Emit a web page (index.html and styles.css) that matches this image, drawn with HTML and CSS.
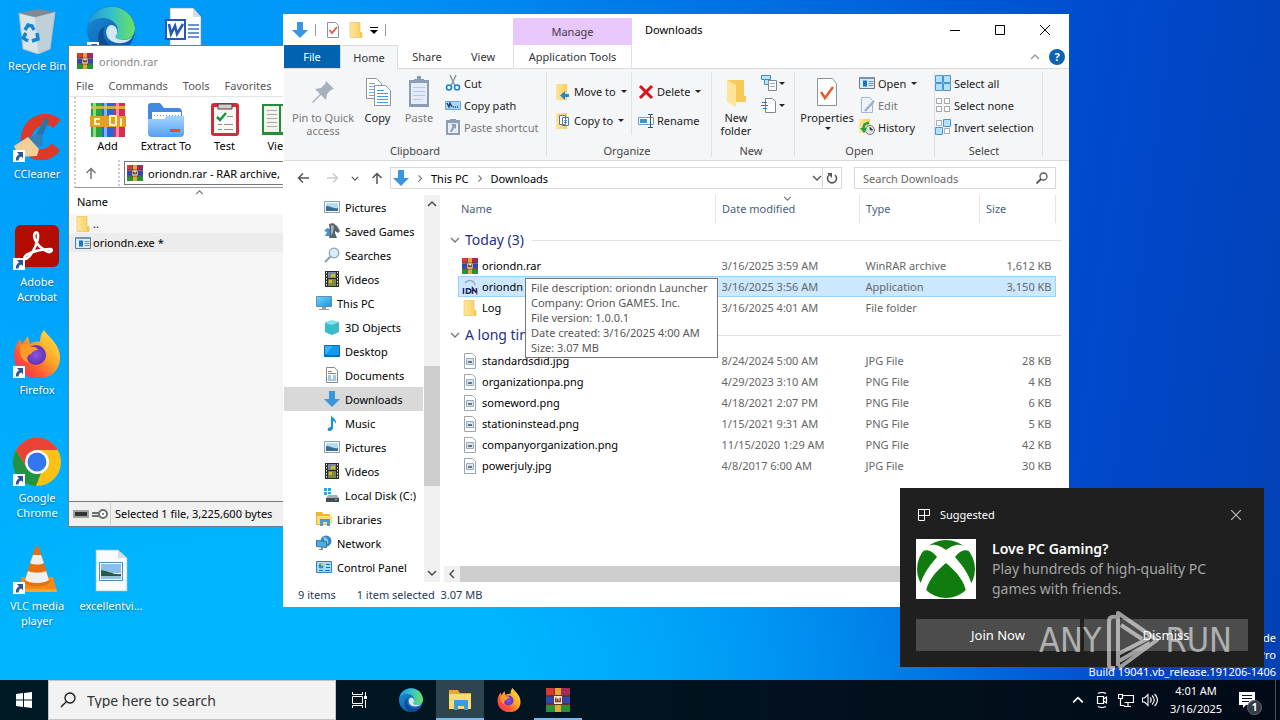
FILE: index.html
```html
<!DOCTYPE html>
<html lang="en">
<head>
<meta charset="utf-8">
<title>Downloads</title>
<link rel="stylesheet" href="styles.css">
</head>
<body>
<svg class="sprite" aria-hidden="true">
  <defs>
    <linearGradient id="g-fold" x1="0" x2="1"><stop offset="0" stop-color="#ffe69a"/><stop offset="1" stop-color="#f8cf5c"/></linearGradient>
    <linearGradient id="g-edge" x1="0" y1="0" x2="1" y2="1"><stop offset="0" stop-color="#1a8fd8"/><stop offset="1" stop-color="#0b4fa0"/></linearGradient>
    <linearGradient id="g-edge2" x1="0" y1="0" x2="1" y2="0"><stop offset="0" stop-color="#2494dc"/><stop offset=".5" stop-color="#35c1c8"/><stop offset="1" stop-color="#6be35b"/></linearGradient>
    <linearGradient id="g-fox" x1="1" y1="0" x2="0" y2="1"><stop offset="0" stop-color="#fff04a"/><stop offset=".4" stop-color="#ffa728"/><stop offset=".7" stop-color="#ff5135"/><stop offset="1" stop-color="#e9257f"/></linearGradient>
    <radialGradient id="g-globe"><stop offset="0" stop-color="#9150e8"/><stop offset="1" stop-color="#5a35b5"/></radialGradient>
    <linearGradient id="g-blue" x1="0" y1="0" x2="1" y2="1"><stop offset="0" stop-color="#6fd6ff"/><stop offset="1" stop-color="#1b94e0"/></linearGradient>
    <linearGradient id="g-ext" x1="0" y1="0" x2="0" y2="1"><stop offset="0" stop-color="#a5d6ff"/><stop offset="1" stop-color="#559ff0"/></linearGradient>
  </defs>
  <symbol id="shortcut" viewBox="0 0 12 12"><path fill="#fff" d="M0 0h12v12H0z"/><path fill="#2a5595" d="M4 2h6v6L8 6.500C6 7.500 5.500 9 5.500 10.500H3C2.500 8 3.500 6 6 4.200z"/></symbol>
  <symbol id="folder" viewBox="0 0 16 16"><path fill="url(#g-fold)" stroke="#e5bd55" stroke-width=".6" d="M2 .5h10v10h2v5H2z"/><path fill="#f3c64f" d="M12 10h1.800v5.500H12z"/></symbol>
  <symbol id="down" viewBox="0 0 16 16"><path fill="#3b96dd" d="M5 0h6v8h5l-8 8-8-8h5z"/></symbol>
  <symbol id="rar" viewBox="0 0 16 16"><path fill="#a52a5c" d="M0 0h16v5H0z"/><path fill="#d33c30" d="M0 0h5v5H0z"/><path fill="#2d49b8" d="M0 5.500h16v5H0z"/><path fill="#27913a" d="M0 11h16v5H0z"/><path fill="#7a2a2a" d="M0 4.600h16v1H0zM0 10.300h16v1H0z"/><path fill="#e8a531" d="M6 0h4v16H6z"/><path fill="#f3ead0" stroke="#5c3c28" stroke-width=".7" d="M5 5h6v6H5z"/><path fill="none" stroke="#813b2a" d="M6.500 6.500V9h1.300V7v2h1.700V6.500"/></symbol>
  <symbol id="exe" viewBox="0 0 16 16"><path fill="#d9ecfa" stroke="#65798c" d="M.5 2.500h15v11H.5z"/><path fill="#7894aa" d="M0 2h16v2H0z"/><path fill="#0c78d2" d="M4 5.500h4v6H4z"/><path stroke="#5599d2" d="M9.500 6.500h5M9.500 8.500h5M9.500 10.500h5"/></symbol>
  <symbol id="pic" viewBox="0 0 16 16"><path fill="#fff" stroke="#8ba0b4" d="M.5 2.500h15v11H.5z"/><path fill="#b6dcf6" d="M2 4h12v5H2z"/><path fill="#3d6c92" d="M2 7c4 0 7 3 12 2v3H2z"/></symbol>
  <symbol id="imgfile" viewBox="0 0 16 16"><path fill="#fff" stroke="#9aa6ad" d="M2.500.5h8l3 3v12h-11z"/><path fill="#dae3ea" stroke="#8799a9" stroke-width=".8" d="M4.500 5.500h7v6h-7z"/><path fill="#587c98" d="M6 8h4v2H6z"/></symbol>
  <symbol id="doc" viewBox="0 0 16 16"><path fill="#fff" stroke="#7d8a93" d="M2.500.5h8l3 3v12h-11z"/><path stroke="#4d8fc4" d="M4 4.500h4M4 6.500h8M4 9h3M9 9h3M4 11h3M9 11h3M4 13h8"/></symbol>
  <symbol id="chess" viewBox="0 0 16 16"><path fill="#4593cb" d="M0 8l3-3 3 1v7H1l2-4z"/><path fill="#59636c" d="M5 1l4-1 4 3 3 5-2 2-3-2v2l2 5H5l1-6z"/><path fill="#a5b5c0" d="M7 2l3 1-1 6-2 4z"/></symbol>
  <symbol id="search" viewBox="0 0 16 16"><circle cx="10" cy="6" r="4.800" fill="#d8effb" stroke="#8ba3b2" stroke-width="1.200"/><path stroke="#8e9ca5" stroke-width="2" d="M6.500 9.500L1 15"/></symbol>
  <symbol id="film" viewBox="0 0 16 16"><path fill="#302c25" d="M1 0h14v16H1z"/><path fill="#7886b9" d="M4 1h8v6H4z"/><path fill="#6e8d45" d="M4 8h8v7H4z"/><path fill="#dfb23e" d="M7 3h4v3H7zM5 9h3v3H5z"/><path stroke="#eee" stroke-dasharray="1.500 1.500" d="M2.500 1v14M13.500 1v14"/></symbol>
  <symbol id="pc" viewBox="0 0 16 16"><path fill="url(#g-blue)" stroke="#517993" stroke-width=".8" d="M.5 1.500h15v10H.5z"/><path fill="#8ca0ad" d="M6 12h4v2H6zM3 14h10v1H3z"/></symbol>
  <symbol id="cube" viewBox="0 0 16 16"><path fill="#83e2ec" d="M8 1l7 2v10l-7 3-7-3V3z"/><path fill="#31bdcc" d="M1 4l7 2v10l-7-3z"/><path fill="#159dac" d="M8 6l7-3v10l-7 3z" opacity=".6"/></symbol>
  <symbol id="desk" viewBox="0 0 16 16"><path fill="#1298ef" stroke="#0869b3" d="M.5 2.500h15v11H.5z"/><path fill="#0869b3" d="M1 12h14v1.500H1z"/><path fill="#3db2fa" d="M1 3h8l-7 8H1z"/></symbol>
  <symbol id="note" viewBox="0 0 16 16"><path fill="#198fe0" d="M7 0c1 3 6 4 5 9-1-3-3-3-3-3v7c0 2-2 3-4 3s-2-4 2-4z"/></symbol>
  <symbol id="disk" viewBox="0 0 16 16"><path fill="#24a8e8" d="M0 1h3v3H0zM4 1h3v3H4zM0 5h3v3H0zM4 5h3v2H4z"/><path fill="#a7b0b5" d="M4 8h9l2 3H2z"/><path fill="#454e53" d="M2 11h13v4H2z"/><path fill="#59dd6e" d="M11 12h2v1h-2z"/></symbol>
  <symbol id="lib" viewBox="0 0 16 16"><path fill="#e9b53d" d="M0 1h6l1 2h7v11H0z"/><path fill="#ffdd76" d="M1 5h15v8H1z"/><path fill="#459bdc" d="M4 8h10v7h-3v-4H7v4H4z"/></symbol>
  <symbol id="net" viewBox="0 0 16 16"><circle cx="10" cy="6" r="5.500" fill="#368ac3"/><path fill="#8dcaed" d="M7 2c4 0 6 3 5 7L9 7z"/><path fill="#4fabe0" stroke="#37759f" d="M.5 5.500l10 1v6l-10-1z"/><path fill="#7a93a2" d="M5 12h2v3H3v-1h2z"/></symbol>
  <symbol id="panel" viewBox="0 0 16 16"><path fill="#aadcf8" stroke="#3782b2" d="M.5 2.500h15v11H.5z"/><circle cx="5" cy="7" r="2.500" fill="#248fce"/><path fill="#efb938" d="M5 7V4a3 3 0 013 3z"/><path stroke="#1870a8" d="M10 5.500h4M10 8.500h4M3 11.500h4M9 11.500h5"/></symbol>
  <symbol id="idn" viewBox="0 0 16 16"><path fill="none" stroke="#8fa9c6" stroke-width="1.500" d="M3 4c3-4 9-3 10 2"/><path fill="none" stroke="#25285f" stroke-width="1.500" d="M1.500 9v6M4.500 9.700h2c3 0 3 4.600 0 4.600h-2zM10.500 15V9l4 5V9"/><path stroke="#ba3555" d="M12 12l3 3"/></symbol>
  <symbol id="edge" viewBox="0 0 48 48"><circle cx="24" cy="24" r="24" fill="url(#g-edge)"/><path fill="url(#g-edge2)" d="M1 20C5-5 44-7 48 22c0 9-7 14-17 11-3-1-3-3-1-5 3-8-4-16-14-16C8 12 3 16 1 20z"/><path fill="#0e3e86" d="M18 21c-6 10 5 27 24 19-12 17-31 5-31-7 0-8 4-12 7-12z" opacity=".7"/><path fill="#e9f5fb" d="M24 19c5 0 7 5 6 9-2 2-2 4 1 5 6 2 12 1 15-3-5 10-23 9-26 0-2-5 0-10 4-11z" opacity=".9"/></symbol>
  <symbol id="firefox" viewBox="0 0 48 48"><path fill="url(#g-fox)" d="M4 14l3-5 2 5 6-8 2 8c3-2 7-3 10-2 0-5 1-9 4-12 4 7 17 14 16 29C45 57 2 54 1 26c0-5 1-9 3-12z"/><circle cx="23" cy="25" r="10" fill="url(#g-globe)"/><path fill="#ff9928" d="M8 15c4-2 8-1 10 2 3-1 6 0 7 3-3 0-6 2-7 4-4 1-5 5-2 9-8-2-11-12-8-18z"/></symbol>
  <symbol id="explorer" viewBox="0 0 24 24"><path fill="#e5a72e" d="M1 2h9l2 3h11v4H1z"/><path fill="#ffda70" d="M1 6h22v15H1z"/><path fill="#3c9ce0" d="M6 12h14v10h-4v-4h-6v4H6z"/></symbol>
  <symbol id="arrow" viewBox="0 0 12 12"><path fill="none" stroke="currentColor" stroke-width="1.500" d="M6 12V1.500M1.500 6L6 1.500 10.500 6"/></symbol>
  <symbol id="chev" viewBox="0 0 10 6"><path fill="none" stroke="currentColor" stroke-width="1.400" d="M1 1l4 4 4-4"/></symbol>
  <symbol id="clip" viewBox="0 0 24 32"><path fill="#8d9bb4" d="M2 4h20v27H2z"/><path fill="#e4ecf7" d="M4 7h16v21H4z"/><path fill="#8d9bb4" d="M7 7V3h3V0h4v3h3v4z"/><path stroke="#bac8dc" d="M6 11.500h12M6 15.500h12M6 19.500h12M6 23.500h9"/></symbol>
</svg>

<main class="desktop">
  <div class="icons">
    <a class="shortcut" href="#"><span class="pic"><svg viewBox="0 0 48 48"><path fill="#d9e4e9" stroke="#a9bdc8" d="M6 7l16 4 20-5-5 37-12 5-15-5z"/><path fill="#b1c5cf" d="M22 11l20-5-5 37-12 5z" opacity=".65"/><path fill="#7d8a91" d="M6 7l19-4 17 3-20 5z"/><g fill="none" stroke="#1686d3" stroke-width="3.500"><path d="M12 24l3-5 4 1 2 4M24 27l1 6-6 2M15 35l-5-3 3-5"/></g></svg></span><span>Recycle Bin</span></a>
    <a class="shortcut" href="#"><span class="pic"><svg viewBox="0 0 48 48"><path fill="none" stroke="#dd3829" stroke-width="11" d="M44 10C31-2 10 11 14 29c3 15 20 15 29 4"/><path fill="#2875a7" d="M32 4l4 2-8 19-6-2z"/><path fill="#3680b5" d="M15 23l14-3 1 12-10 1z"/><path fill="#f2cf99" d="M1 32l14-9 11 12-2 7-18 1z"/></svg><svg class="tag"><use href="#shortcut"/></svg></span><span>CCleaner</span></a>
    <a class="shortcut" href="#"><span class="pic"><svg viewBox="0 0 48 48"><rect x="2" y="3" width="44" height="42" rx="6" fill="#b30b00"/><path fill="none" stroke="#fff" stroke-width="2.600" d="M12 37c-3-4 9-9 25-10 4 0 1 5-4 2C25 25 19 16 22 11c3-3 4 3 2 9-2 7-8 17-12 17z"/></svg><svg class="tag"><use href="#shortcut"/></svg></span><span>Adobe Acrobat</span></a>
    <a class="shortcut" href="#"><span class="pic"><svg><use href="#firefox"/></svg><svg class="tag"><use href="#shortcut"/></svg></span><span>Firefox</span></a>
    <a class="shortcut" href="#"><span class="pic"><svg viewBox="0 0 48 48"><circle cx="24" cy="24" r="24" fill="#fbc116"/><path fill="#229342" d="M3 12l11 18c2 4 7 6 14 5l-5 13A24 24 0 013 12z"/><path fill="#ea4335" d="M3 12a24 24 0 0142 0H24L14 30z"/><circle cx="24" cy="24" r="12" fill="#fff"/><circle cx="24" cy="24" r="9.500" fill="#3377ef"/></svg><svg class="tag"><use href="#shortcut"/></svg></span><span>Google Chrome</span></a>
    <a class="shortcut" href="#"><span class="pic"><svg viewBox="0 0 48 48"><path fill="#f48a13" d="M9 31h31l4 14H4z"/><path fill="#ffa52d" d="M5 43h38l1 3H4z"/><path fill="#e86f0b" d="M22 2c1-2 3-2 4 0l11 34c-4 6-22 6-26 0z"/><path fill="#eef0f0" d="M20 9h8l3 8c-3 2-10 2-14 0zM15 25c5 2 14 2 18 0l3 9c-5 4-19 4-24 0z"/></svg><svg class="tag"><use href="#shortcut"/></svg></span><span>VLC media player</span></a>
    <a class="shortcut col2" href="#" aria-label="Edge"><span class="pic"><svg><use href="#edge"/></svg><svg class="tag"><use href="#shortcut"/></svg></span></a>
    <a class="shortcut col2 last" href="#"><span class="pic"><svg viewBox="0 0 48 48"><path fill="#f9fafb" stroke="#abc" stroke-width=".7" d="M9 4h22l9 8v33H9z"/><path fill="#d3dde5" d="M31 4v8h9z"/><path fill="#fff" stroke="#4f8abb" d="M12.500 16.500h23v18h-23z"/><path fill="#8bbfea" d="M14 18h20v9H14z"/><path fill="#285a49" d="M14 24c7 1 13 5 20 4v2H14z"/><path fill="#97c4d8" d="M14 30h20v3H14z"/></svg></span><span>excellentvi...</span></a>
    <a class="shortcut col3" href="#" aria-label="Document"><span class="pic"><svg viewBox="0 0 48 48"><path fill="#fff" stroke="#7f9bb4" stroke-width=".6" d="M9 2h23l8 9v35H9z"/><path fill="#d7dce2" d="M32 2v9h8z"/><path stroke="#3c6fc0" stroke-width="1.300" d="M27 19h11M27 23h11M27 27h11M27 31h11"/><path fill="#2459b8" d="M4 13h21v21H4z"/><path fill="#fff" d="M6 15h17v17H6z"/><path fill="none" stroke="#2459b8" stroke-width="2.600" d="M8 18l2 10 4-8 2 8 6-10"/></svg></span></a>
  </div>

  <p class="build">Test Mode<br>Windows 10 Pro<br>Build 19041.vb_release.191206-1406</p>

  <section class="window winrar" aria-label="oriondn.rar">
    <header class="wr-title"><svg class="i16"><use href="#rar"/></svg>oriondn.rar</header>
    <nav class="wr-menu"><button>File</button><button>Commands</button><button>Tools</button><button>Favorites</button></nav>
    <div class="wr-tools">
      <button><svg viewBox="0 0 36 36"><path fill="#27a543" d="M1 1h11v34H1z"/><path fill="#2c63d8" d="M12 1h12v34H12z"/><path fill="#d62e55" d="M24 1h11v34H24z"/><path fill="#8ddd79" d="M3 1h3v34H3z"/><path fill="#83b4ff" d="M14 1h3v34h-3z"/><path fill="#ff8caa" d="M26 1h3v34h-3z"/><path fill="#e5c33a" d="M1 4h34v3H1z" opacity=".8"/><path fill="#e2a024" d="M0 14h36v11H0z"/><path fill="none" stroke="#fff0b5" stroke-width="2" d="M10 17H5v5h5M20 14h6v9h-6zM31 16v8"/></svg>Add</button>
      <button class="wide"><svg viewBox="0 0 36 36"><path fill="#4188df" d="M0 4q0-3 3-3h9l4 5h14q4 0 4 4v20H0z"/><path fill="#fff" d="M4 10h29v10H4z"/><path fill="none" stroke="#7f9fb9" stroke-dasharray="1 2" d="M6 13.500h25"/><path fill="url(#g-ext)" d="M0 17h16l3-3h17v17q0 4-4 4H4q-4 0-4-4z"/><path fill="#e94a32" d="M22 27h10v3H22z"/></svg>Extract To</button>
      <button><svg viewBox="0 0 36 36"><rect x="4" y="1" width="28" height="33" rx="3" fill="#d42a39"/><path fill="#faf8f6" d="M7 5h22v26H7z"/><path fill="#c8d0d2" stroke="#6b3138" d="M11 2h14v5H11z"/><path fill="none" stroke="#18943e" stroke-width="2.500" d="M10 15l3 3 6-7"/><path stroke="#8b9296" d="M20 14.500h6M11 22.500h4M17 22.500h9M11 27.500h4M17 27.500h9"/></svg>Test</button>
      <button><svg viewBox="0 0 36 36"><path fill="#248c3a" d="M0 2h36v31H0z"/><path fill="#f3f3ed" d="M2 4h15v26H2zM19 4h15v26H19z"/><path stroke="#aaa" d="M5 8.500h10M5 12.500h10M5 16.500h10M5 20.500h10M5 24.500h10"/></svg>View</button>
    </div>
    <div class="wr-path">
      <button class="up" aria-label="Up"><svg class="i12"><use href="#arrow"/></svg></button>
      <label class="combo"><svg class="i16"><use href="#rar"/></svg><select aria-label="Archive path"><option>oriondn.rar - RAR archive, unpacked size 3,225,600 bytes</option></select></label>
    </div>
    <table class="wr-list">
      <thead><tr><th scope="col">Name</th></tr></thead>
      <tbody>
        <tr><td><svg class="i16"><use href="#folder"/></svg>..</td></tr>
        <tr class="picked"><td><svg class="i16"><use href="#exe"/></svg>oriondn.exe *</td></tr>
      </tbody>
    </table>
    <svg class="sort wr-sort"><use href="#chev"/></svg>
    <footer class="wr-status">
      <svg class="drives" viewBox="0 0 36 14"><path fill="#9da2a5" d="M0 3h16v8H0z"/><path fill="#333" d="M2 5h12v4H2z"/><path fill="none" stroke="#6b6f72" stroke-width="2" d="M19 6h9M19 9h8"/><circle cx="30" cy="7" r="4" fill="#fff" stroke="#6b6f72" stroke-width="2"/><circle cx="30" cy="7" r="1" fill="#666"/></svg>
      <span>Selected 1 file, 3,225,600 bytes</span>
    </footer>
  </section>

  <section class="window explorer" aria-label="Downloads">
    <header class="titlebar">
      <div class="quick">
        <svg class="i16"><use href="#down"/></svg><i></i>
        <button aria-label="Properties"><svg class="i16" viewBox="0 0 16 16"><path fill="#fff" stroke="#8793a0" d="M2.500.5h8l3 3v12h-11z"/><path fill="none" stroke="#e2593c" stroke-width="1.800" d="M4.500 8l2.500 3 5-6"/></svg></button>
        <button aria-label="New folder"><svg class="i16"><use href="#folder"/></svg></button>
        <button aria-label="Customize"><svg class="i8" viewBox="0 0 8 8"><path d="M0 1h8v1H0zM0 4h8L4 8z"/></svg></button><i></i>
      </div>
      <span class="manage">Manage</span>
      <h1>Downloads</h1>
      <div class="caption">
        <button aria-label="Minimize"><svg viewBox="0 0 10 10"><path d="M0 5.500h10"/></svg></button>
        <button aria-label="Maximize"><svg viewBox="0 0 10 10"><path d="M.5.5h9v9h-9z"/></svg></button>
        <button aria-label="Close"><svg viewBox="0 0 10 10"><path d="M0 0l10 10M10 0L0 10"/></svg></button>
      </div>
    </header>
    <nav class="tabs">
      <button class="file">File</button><button class="home">Home</button><button>Share</button><button>View</button><button class="apptools">Application Tools</button>
      <span class="help"><svg class="fold flip"><use href="#chev"/></svg><button aria-label="Help">?</button></span>
    </nav>
    <div class="ribbon">
      <div class="group g-clip">
        <div class="tools">
          <button class="big off"><svg viewBox="0 0 32 32"><path fill="#a5b1c0" d="M19 5l8 8-3 1-4 4-1 6-5-5-8 8-1-1 8-8-5-5 6-1 4-4z"/></svg>Pin to Quick access</button>
          <button class="big mid"><svg viewBox="0 0 32 32"><path fill="#fff" stroke="#8795a5" d="M4.500 2.500h10l5 5v15h-15z"/><path stroke="#73ade5" d="M7 7.500h6M7 10.500h9M7 13.500h9M7 16.500h9M7 19.500h9"/><path fill="#fff" stroke="#8795a5" d="M12.500 9.500h11l5 5v15h-16z"/><path stroke="#4f98e1" d="M15 14.500h7M15 17.500h11M15 20.500h11M15 23.500h11M15 26.500h11"/></svg>Copy</button>
          <button class="big narrow off"><svg><use href="#clip"/></svg>Paste</button>
          <div class="stack">
            <button><svg class="i16" viewBox="0 0 16 16"><path stroke="#8b99a3" stroke-width="1.500" d="M5 0l5 11M11 0L6 11"/><circle cx="4" cy="12.500" r="2.500" fill="none" stroke="#1c84cf" stroke-width="1.600"/><circle cx="12" cy="12.500" r="2.500" fill="none" stroke="#1c84cf" stroke-width="1.600"/></svg>Cut</button>
            <button><svg class="i16" viewBox="0 0 16 16"><path fill="#a8d6f6" stroke="#75a9d2" d="M.5 4.500h15v8H.5z"/><path fill="none" stroke="#183b68" stroke-width="1.300" d="M2 6l2 4 1-4 2 4M8 10h1M10 10h1M12 10h1"/></svg>Copy path</button>
            <button class="off"><svg class="i16" viewBox="0 0 16 16"><path fill="#8f9eb5" d="M1 1h14v15H1z"/><path fill="#e7edf6" d="M3 4h10v10H3z"/><path fill="#8f9eb5" d="M5 0h6v3H5zM6 5h5v5L9.500 8.500 7 13H5l2.500-6z"/></svg>Paste shortcut</button>
          </div>
        </div>
        <h2>Clipboard</h2>
      </div>
      <div class="group g-org">
        <div class="tools">
          <div class="stack two split">
            <button><svg class="i16" viewBox="0 0 16 16"><path fill="url(#g-fold)" d="M1 0h11v16H1z"/><path fill="#2a87cf" d="M14 10v3h-4v3l-5-4.500L10 7v3z"/></svg>Move to<b></b></button>
            <button><svg class="i16" viewBox="0 0 16 16"><path fill="url(#g-fold)" d="M1 0h11v16H1z"/><path fill="#fff" stroke="#5a7895" d="M4.500 2.500h6v9h-6zM7.500 4.500h6v8h-6z"/><path stroke="#5595d2" d="M9 7.500h3M9 9.500h3"/></svg>Copy to<b></b></button>
          </div>
          <div class="stack two">
            <button><svg class="i16" viewBox="0 0 16 16"><path stroke="#d9121d" stroke-width="3" d="M2 2l12 12M14 2L2 14"/></svg>Delete<b></b></button>
            <button><svg class="i16" viewBox="0 0 16 16"><path fill="#fff" stroke="#6f9dc1" d="M.5 4.500h15v7H.5z"/><path fill="#3994dc" d="M2 6h7v4H2z"/><path fill="none" stroke="#4d4d4d" d="M10 1.500h5M10 14.500h5M12.500 1v14"/></svg>Rename</button>
          </div>
        </div>
        <h2>Organize</h2>
      </div>
      <div class="group g-new">
        <div class="tools">
          <button class="big narrow"><svg viewBox="0 0 24 32"><path fill="#f5ca58" d="M3 4h17v16h2v6H3z"/><path fill="#ffe599" d="M3 4l9 5v22l-9-5z"/></svg>New folder</button>
          <div class="stack">
            <button aria-label="New item"><svg class="i16" viewBox="0 0 16 16"><path fill="#bde2fa" stroke="#3e8ebf" d="M.5.5h9v4h-9zM3.500 4.500h4v5h-4z"/><path fill="#fff" stroke="#7b8994" d="M7.500 5.500h8v10h-8z"/><path stroke="#9baab4" d="M9 8.500h5M9 11.500h5"/></svg><b></b></button>
            <button aria-label="Easy access"><svg class="i16" viewBox="0 0 16 16"><path fill="#fff" stroke="#7b8994" d="M4.500 15.500v-14h7l3 3v11z"/><path stroke="#267bb9" d="M0 8.500h7M1 5.500h5M2 11.500h4"/></svg><b></b></button>
          </div>
        </div>
        <h2>New</h2>
      </div>
      <div class="group g-open">
        <div class="tools">
          <button class="big mid"><svg viewBox="0 0 24 32"><path fill="#fff" stroke="#8b929b" d="M2.500 2.500h15l4 5v22h-19z"/><path fill="none" stroke="#e35e2d" stroke-width="2.500" d="M6 16l4 6 8-11"/></svg>Properties<b></b></button>
          <div class="stack">
            <button><svg class="i16"><use href="#exe"/></svg>Open<b></b></button>
            <button class="off"><svg class="i16" viewBox="0 0 16 16"><path fill="#eef3fa" stroke="#a8b6cc" d="M2.500.5h8l3 3v12h-11z"/><path stroke="#a1afc4" stroke-width="2.500" d="M15 4L6 14"/></svg>Edit</button>
            <button><svg class="i16" viewBox="0 0 16 16"><path fill="url(#g-fold)" d="M0 0h11v14H0z"/><circle cx="11" cy="11" r="4.500" fill="#dde4e5" stroke="#718087"/><path stroke="#667" d="M11 8v3h3"/><path fill="none" stroke="#21a045" stroke-width="2.500" d="M10 4c-5 0-6 3-5 7"/><path fill="#21a045" d="M1 9h7l-3 5z"/></svg>History</button>
          </div>
        </div>
        <h2>Open</h2>
      </div>
      <div class="group g-sel">
        <div class="tools"><div class="stack">
          <button><svg class="i16" viewBox="0 0 16 16"><path fill="#b6dfff" stroke="#4799d2" d="M.5.500h7v7h-7zM8.500.5h7v7h-7zM.5 8.500h7v7h-7zM8.500 8.500h7v7h-7z"/></svg>Select all</button>
          <button><svg class="i16" viewBox="0 0 16 16"><path fill="#fff" stroke="#a0a9af" d="M1.500 1.500h5v5h-5zM9.500 1.500h5v5h-5zM1.500 9.500h5v5h-5zM9.500 9.500h5v5h-5z"/></svg>Select none</button>
          <button><svg class="i16" viewBox="0 0 16 16"><path fill="#fff" stroke="#9eafbb" d="M1.500 1.500h5v5h-5zM9.500 9.500h5v5h-5z"/><path fill="#b6dfff" stroke="#4799d2" d="M8.500.5h7v7h-7zM.5 8.500h7v7h-7z"/></svg>Invert selection</button>
        </div></div>
        <h2>Select</h2>
      </div>
    </div>
    <div class="address">
      <button aria-label="Back"><svg class="i12 left"><use href="#arrow"/></svg></button>
      <button aria-label="Forward" class="dim"><svg class="i12 right"><use href="#arrow"/></svg></button>
      <button aria-label="Recent" class="small"><svg class="i8"><use href="#chev"/></svg></button>
      <button aria-label="Up"><svg class="i12"><use href="#arrow"/></svg></button>
      <div class="crumbs"><svg class="i16"><use href="#down"/></svg><svg class="sep"><use href="#chev"/></svg><a href="#">This PC</a><svg class="sep"><use href="#chev"/></svg><a href="#">Downloads</a>
        <span class="end"><svg class="fold"><use href="#chev"/></svg><button aria-label="Refresh"><svg class="i12" viewBox="0 0 12 12"><path fill="none" stroke="#555" stroke-width="1.600" d="M3 3a4.500 4.500 0 106 0"/><path fill="#555" d="M1 1h5v5z"/></svg></button></span>
      </div>
      <label class="find"><input type="text" placeholder="Search Downloads" aria-label="Search Downloads"><svg class="i12" viewBox="0 0 12 12"><circle cx="7.500" cy="4.500" r="3.500" fill="none" stroke="#555" stroke-width="1.300"/><path stroke="#555" stroke-width="1.800" d="M5 7L.5 11.500"/></svg></label>
    </div>
    <div class="body">
      <nav class="tree">
        <a href="#"><svg class="i16"><use href="#pic"/></svg>Pictures</a>
        <a href="#"><svg class="i16"><use href="#chess"/></svg>Saved Games</a>
        <a href="#"><svg class="i16"><use href="#search"/></svg>Searches</a>
        <a href="#"><svg class="i16"><use href="#film"/></svg>Videos</a>
        <a href="#" class="top"><svg class="i16"><use href="#pc"/></svg>This PC</a>
        <a href="#"><svg class="i16"><use href="#cube"/></svg>3D Objects</a>
        <a href="#"><svg class="i16"><use href="#desk"/></svg>Desktop</a>
        <a href="#"><svg class="i16"><use href="#doc"/></svg>Documents</a>
        <a href="#" class="current"><svg class="i16"><use href="#down"/></svg>Downloads</a>
        <a href="#"><svg class="i16"><use href="#note"/></svg>Music</a>
        <a href="#"><svg class="i16"><use href="#pic"/></svg>Pictures</a>
        <a href="#"><svg class="i16"><use href="#film"/></svg>Videos</a>
        <a href="#"><svg class="i16"><use href="#disk"/></svg>Local Disk (C:)</a>
        <a href="#" class="top"><svg class="i16"><use href="#lib"/></svg>Libraries</a>
        <a href="#" class="top"><svg class="i16"><use href="#net"/></svg>Network</a>
        <a href="#" class="top"><svg class="i16"><use href="#panel"/></svg>Control Panel</a>
      </nav>
      <div class="vbar"><svg class="fold flip"><use href="#chev"/></svg><span class="track"><span class="thumb"></span></span><svg class="fold"><use href="#chev"/></svg></div>
      <div class="content">
        <table class="files">
          <colgroup><col class="c-name"><col class="c-date"><col class="c-type"><col class="c-size"></colgroup>
          <thead><tr><th scope="col">Name</th><th scope="col">Date modified<svg class="sort"><use href="#chev"/></svg></th><th scope="col">Type</th><th scope="col">Size</th></tr></thead>
          <tbody>
            <tr class="bucket"><th colspan="4"><span><svg class="fold"><use href="#chev"/></svg>Today (3)</span></th></tr>
            <tr><td><svg class="i16"><use href="#rar"/></svg>oriondn.rar</td><td>3/16/2025 3:59 AM</td><td>WinRAR archive</td><td>1,612 KB</td></tr>
            <tr class="selected"><td><svg class="i16"><use href="#idn"/></svg>oriondn</td><td>3/16/2025 3:56 AM</td><td>Application</td><td>3,150 KB</td></tr>
            <tr><td><svg class="i16"><use href="#folder"/></svg>Log</td><td>3/16/2025 4:01 AM</td><td>File folder</td><td></td></tr>
          </tbody>
          <tbody>
            <tr class="bucket"><th colspan="4"><span><svg class="fold"><use href="#chev"/></svg>A long time ago (6)</span></th></tr>
            <tr><td><svg class="i16"><use href="#imgfile"/></svg>standardsdid.jpg</td><td>8/24/2024 5:00 AM</td><td>JPG File</td><td>28 KB</td></tr>
            <tr><td><svg class="i16"><use href="#imgfile"/></svg>organizationpa.png</td><td>4/29/2023 3:10 AM</td><td>PNG File</td><td>4 KB</td></tr>
            <tr><td><svg class="i16"><use href="#imgfile"/></svg>someword.png</td><td>4/18/2021 2:07 PM</td><td>PNG File</td><td>6 KB</td></tr>
            <tr><td><svg class="i16"><use href="#imgfile"/></svg>stationinstead.png</td><td>1/15/2021 9:31 AM</td><td>PNG File</td><td>5 KB</td></tr>
            <tr><td><svg class="i16"><use href="#imgfile"/></svg>companyorganization.png</td><td>11/15/2020 1:29 AM</td><td>PNG File</td><td>42 KB</td></tr>
            <tr><td><svg class="i16"><use href="#imgfile"/></svg>powerjuly.jpg</td><td>4/8/2017 6:00 AM</td><td>JPG File</td><td>30 KB</td></tr>
          </tbody>
        </table>
        <div class="hbar"><svg class="west"><use href="#chev"/></svg><span></span></div>
      </div>
    </div>
    <footer class="status"><span>9 items</span><span>1 item selected&nbsp; 3.07 MB</span></footer>
    <div class="tooltip" role="tooltip">File description: oriondn Launcher<br>Company: Orion GAMES. Inc.<br>File version: 1.0.0.1<br>Date created: 3/16/2025 4:00 AM<br>Size: 3.07 MB</div>
  </section>

  <aside class="toast">
    <header><svg class="i12" viewBox="0 0 12 12"><path fill="none" stroke="#fff" d="M.5.5h11v6h-11zM6.500.5v11h-6v-11M3.500 6.500v0"/></svg><span>Suggested</span><button aria-label="Close"><svg class="i10" viewBox="0 0 10 10"><path stroke="#bbb" stroke-width="1.200" d="M0 0l10 10M10 0L0 10"/></svg></button></header>
    <div class="offer">
      <svg class="xbox" viewBox="0 0 60 60"><path fill="#fff" d="M0 0h60v60H0z"/><circle cx="30" cy="30" r="29" fill="#107c10"/><path fill="#fff" d="M10 8c7-5 15-1 20 3 5-4 13-8 20-3l3 4c-5-2-10 1-14 6 9 10 18 23 17 34l-6 2c0-10-10-22-20-30-10 8-20 20-20 30l-6-2C3 41 12 28 21 18 17 13 12 10 7 12z"/></svg>
      <p><strong>Love PC Gaming?</strong><br>Play hundreds of high-quality PC games with friends.</p>
    </div>
    <div class="choices"><button>Join Now</button><button>Dismiss</button></div>
  </aside>

  <div class="brand"><span>ANY</span><svg viewBox="0 0 54 60"><path fill="none" stroke="currentColor" stroke-width="4" stroke-linejoin="round" d="M12 56V3l39 27-38 28M10 7c-6-1-7 1-7 6v42c0 3 2 3 6 3M15 15l21 14M12 44l31-16M13 51l31-18"/></svg><span>RUN</span></div>
</main>

<footer class="taskbar">
  <button class="start" aria-label="Start"><svg class="i16" viewBox="0 0 16 16"><path fill="#fff" d="M0 2l7-1v6.500H0zM8 1l8-1v7.500H8zM0 8.500h7V15l-7-1zM8 8.500h8V16l-8-1z"/></svg></button>
  <label class="ask"><svg class="i16" viewBox="0 0 16 16"><circle cx="10" cy="6" r="5" fill="none" stroke="#111" stroke-width="1.300"/><path stroke="#111" stroke-width="1.300" d="M6.500 9.500L1 15"/></svg><input type="text" placeholder="Type here to search" aria-label="Search"></label>
  <button aria-label="Task view"><svg class="i16" viewBox="0 0 16 16"><path fill="none" stroke="#fff" d="M.5 4.500h10v7H.5zM.5 0v2.500h10V0M.5 16v-2.500h10V16M13.500 0v4M13.500 8v8"/><path fill="#fff" d="M12 4h3v3h-3z"/></svg></button>
  <button class="app" aria-label="Edge"><svg><use href="#edge"/></svg></button>
  <button class="app on" aria-label="File Explorer"><svg><use href="#explorer"/></svg></button>
  <button class="app" aria-label="Firefox"><svg><use href="#firefox"/></svg></button>
  <button class="app run" aria-label="WinRAR"><svg><use href="#rar"/></svg></button>
  <div class="tray">
    <svg class="i12 flip"><use href="#chev"/></svg>
    <svg class="i16" viewBox="0 0 16 16"><path fill="none" stroke="#fff" stroke-width="1.200" d="M3.500 4.500h6v7h-6zM9.500 7l3-2v6l-3-2M4 1.500c3-1.500 5-1.500 8 0M4 14.500c3 1.500 5 1.500 8 0"/></svg>
    <svg class="i16" viewBox="0 0 16 16"><path fill="none" stroke="#fff" stroke-width="1.200" d="M5 3.500h10.500v7h-9M.5 2.500h4v4h-4zM2.500 6.500v7h4M10 11v3M6 14.500h7"/></svg>
    <svg class="i16" viewBox="0 0 16 16"><path fill="none" stroke="#fff" stroke-width="1.100" d="M.5 6h2L6 2.500v11L2.500 10h-2zM8 5.500c1.500 1.500 1.500 3.500 0 5M10 3.500c3 3 3 6 0 9M12.500 2c4 4 4 8 0 12"/></svg>
    <time datetime="2025-03-16T04:01">4:01 AM<br>3/16/2025</time>
    <span class="bell"><svg class="i16" viewBox="0 0 16 16"><path fill="#fff" d="M0 0h16v13H7l-3 3v-3H0z"/><path stroke="#08131f" d="M3 3.500h10M3 6.500h10M3 9.500h7"/></svg><b>1</b></span>
  </div>
</footer>
</body>
</html>
```
FILE: styles.css
```css
* { box-sizing: border-box; }
body { margin: 0; height: 100vh; display: flex; flex-direction: column; overflow: hidden; font: 11px/15px "Noto Sans", "Open Sans", sans-serif; color: #000; }
button, input, select { font: inherit; color: inherit; background: none; border: 0; padding: 0; margin: 0; }
a { color: inherit; text-decoration: none; }
svg { display: block; flex: none; }
.sprite { position: absolute; width: 0; height: 0; }
.i8 { width: 8px; height: 8px; }
.i10 { width: 10px; height: 10px; }
.i12 { width: 12px; height: 12px; }
.i16 { width: 16px; height: 16px; }
.fold { width: 10px; height: 6px; }
.flip { transform: rotate(180deg); }

.desktop { position: relative; flex: 1; min-height: 0; background: radial-gradient(ellipse 900px 480px at 20% 100%, #00b4ff 30%, #00b4ff00), linear-gradient(97deg, #00a2fb 0%, #0096f8 25%, #006ce2 58%, #0049cf 82%, #0341b4 100%); }
.icons { display: grid; grid-template-rows: repeat(6, 108px); grid-template-columns: repeat(3, 74px); grid-auto-flow: column; padding-top: 6px; }
.shortcut { display: flex; flex-direction: column; align-items: center; gap: 4px; text-align: center; color: #fff; text-shadow: 0 1px 2px #0006; }
.shortcut > span + span { width: 64px; }
.shortcut .pic { position: relative; width: 48px; height: 48px; }
.shortcut .pic > svg { width: 48px; height: 48px; }
.shortcut .pic > .tag { position: absolute; left: 0; bottom: 0; width: 12px; height: 12px; }
.col2 { grid-column: 2; grid-row: 1; }
.col3 { grid-column: 3; grid-row: 1; }
.last { grid-row: 6; }
.build { position: absolute; right: 4px; bottom: 0; margin: 0; color: #fff; text-align: right; line-height: 17px; }

.window { position: absolute; display: flex; flex-direction: column; background: #fff; overflow: hidden; }
.winrar { left: 68px; top: 45px; width: 520px; bottom: 153px; border: 1px solid #6c7d88; background: #f5f5f5; }
.wr-title, .wr-menu, .wr-tools, .wr-path { background: #fff; }
.wr-title { display: flex; align-items: center; gap: 6px; height: 30px; padding-left: 8px; color: #888; }
.wr-menu { display: flex; gap: 15px; height: 21px; padding-left: 7px; color: #555; border-bottom: 1px solid #e4e4e4; }
.wr-menu button { height: 18px; }
.wr-tools { display: flex; height: 62px; margin-left: 5px; padding: 5px 0 0 4px; border-left: 2px dotted #ccc; box-shadow: -5px 0 #fff; }
.wr-tools button { display: flex; flex-direction: column; align-items: center; width: 55px; }
.wr-tools .wide { width: 62px; }
.wr-tools svg { width: 36px; height: 36px; }
.wr-path { display: flex; align-items: center; height: 29px; margin-left: 5px; border-left: 2px dotted #ccc; border-bottom: 1px solid #9a9a9a; box-shadow: -5px 0 #fff; }
.up { width: 44px; height: 26px; padding-left: 9px; color: #777; border-right: 2px dotted #ccc; }
.combo { flex: 1; display: flex; align-items: center; gap: 5px; height: 24px; margin-left: 4px; padding-left: 2px; border: 1px solid #777; }
.combo select { flex: 1; appearance: none; }
.wr-list { width: 100%; border-collapse: collapse; }
.wr-list th { height: 26px; padding: 1px 8px 0; text-align: left; font-weight: 400; background: #fff; }
.wr-list td { display: flex; align-items: center; height: 19px; gap: 2px; padding-left: 6px; }
.picked { background: #ececec; }
.sort { position: absolute; width: 9px; height: 5px; color: #777; }
.wr-sort { top: 144px; left: 126px; transform: rotate(180deg); }
.wr-status { margin-top: auto; display: flex; align-items: center; height: 25px; padding-left: 4px; gap: 1px; background: #f0f0f0; border-top: 1px solid #777; }
.wr-status span { border-left: 1px solid #d0d0d0; padding-left: 4px; line-height: 22px; }
.drives { width: 36px; height: 14px; }

.explorer { left: 283px; right: 211px; top: 14px; bottom: 73px; padding-left: 1px; }
.titlebar { display: flex; height: 31px; flex: none; }
.quick { display: flex; align-items: center; width: 229px; padding-left: 8px; gap: 7px; }
.quick i { width: 1px; height: 12px; background: #999; }
.quick i + button { margin-left: 2px; }
.quick button:nth-of-type(3) { margin-left: -1px; }
.manage { width: 119px; margin-top: 4px; line-height: 28px; text-align: center; background: #e8c8fb; color: #43374a; }
.titlebar h1 { margin: 0 0 0 13px; font-size: 11px; line-height: 31px; font-weight: 400; }
.caption { margin-left: auto; display: flex; padding-right: 2px; }
.caption button { width: 45px; display: grid; place-items: center; }
.caption svg { width: 10px; height: 10px; fill: none; stroke: #000; }
.tabs { display: flex; flex: none; height: 24px; color: #333; border-bottom: 1px solid #dadbdc; }
.tabs > button { width: 56px; height: 23px; }
.tabs .file { background: #0063b1; color: #fff; }
.tabs .home { width: 58px; height: 24px; padding-bottom: 1px; background: #f5f6f7; border: 1px solid #dadbdc; border-bottom: 0; }
.tabs .home + button { margin-left: 1px; }
.tabs .apptools { width: 119px; margin-left: 2px; border: solid #e4dce8; border-width: 0 1px; }
.help { display: flex; align-items: center; margin-left: auto; gap: 9px; padding-right: 4px; color: #999; }
.help button { width: 16px; height: 16px; border-radius: 50%; background: #0c62b5; color: #fff; font-weight: 700; line-height: 15px; }
.ribbon { display: flex; flex: none; height: 92px; padding: 3px 0; background: #f5f6f7; border-bottom: 1px solid #dadbdc; color: #222; }
.group { display: flex; flex-direction: column; border-right: 1px solid #e0e1e2; }
.group h2 { margin: auto 0 0; text-align: center; font-size: 11px; line-height: 13px; font-weight: 400; color: #444; }
.g-clip { width: 263px; }
.g-org { width: 165px; padding-left: 8px; }
.g-new { width: 83px; padding-left: 4px; }
.g-open { width: 140px; padding-left: 2px; }
.g-sel { width: 108px; }
.g-org h2, .g-open h2 { padding-right: 12px; }
.g-sel h2 { padding-right: 9px; }
.g-new h2 { padding-right: 8px; }
.tools { display: flex; }
.big { display: flex; flex-direction: column; align-items: center; width: 78px; line-height: 13px; gap: 3px; padding-top: 4px; }
.big svg { width: 32px; height: 32px; }
.big.mid { width: 60px; }
.g-clip .mid { width: 31px; }
.big.narrow { width: 40px; }
.g-clip .narrow { width: 52px; }
.off { color: #777; }
.stack { display: flex; flex-direction: column; }
.stack button { display: flex; align-items: center; gap: 3px; height: 22px; padding-left: 0; white-space: nowrap; }
.stack.two button { height: 29px; }
.stack.two { padding-top: 5px; }
.split { width: 77px; margin-right: 6px; border-right: 1px solid #e0e1e2; }
.tools b { border: 3px solid transparent; border-top-color: #222; border-bottom: 0; margin-left: 2px; }
.g-new .stack { padding-left: 5px; }
.g-new .stack b { margin-left: -1px; }
.g-open .stack { padding-left: 2px; }
.address { display: flex; align-items: center; flex: none; height: 34px; padding: 0 13px 0 7px; color: #555; }
.address > button { width: 24px; height: 24px; display: grid; place-items: center; }
.address .dim { color: #ccc; margin-left: 6px; }
.address > .small { width: 20px; }
.address .small svg { height: 5px; }
.left { transform: rotate(-90deg); }
.right { transform: rotate(90deg); }
.crumbs { flex: 1; display: flex; align-items: center; gap: 7px; height: 22px; margin-left: 1px; padding-left: 2px; border: 1px solid #d9d9d9; color: #000; }
.sep { width: 8px; height: 5px; transform: rotate(-90deg); color: #777; }
.end { display: flex; align-items: center; margin-left: auto; color: #555; }
.end button { border-left: 1px solid #d9d9d9; height: 20px; padding: 0 3px; }
.find { display: flex; align-items: center; width: 202px; height: 22px; margin-left: 12px; padding: 0 7px 0 8px; border: 1px solid #d9d9d9; }
.find input { flex: 1; min-width: 0; }
input::placeholder { color: #666; opacity: 1; }
.body { display: flex; flex: 1; min-height: 0; }
.tree { width: 140px; flex: none; overflow: hidden; }
.tree a { display: flex; align-items: center; gap: 5px; height: 24px; padding-left: 40px; margin-right: 1px; white-space: nowrap; }
.tree .top { padding-left: 32px; }
.tree .current { background: #d9d9d9; }
.vbar { display: flex; flex-direction: column; align-items: center; width: 16px; padding: 6px 0; background: #f0f0f0; color: #444; }
.track { flex: 1; width: 16px; display: flex; flex-direction: column; }
.thumb { height: 33%; margin-top: auto; margin-bottom: 84px; background: #cdcdcd; }
.content { flex: 1; min-width: 0; display: flex; flex-direction: column; padding-left: 4px; }
.files { width: calc(100% - 27px); margin-left: 14px; table-layout: fixed; border-collapse: collapse; color: #666; }
.c-date { width: 144px; }
.c-type { width: 120px; }
.c-size { width: 76px; }
.files th { position: relative; height: 28px; padding: 0 6px 1px; font-weight: 400; text-align: left; color: #4c607a; border-right: 1px solid #e5e5e5; }
.files thead th:first-child { padding-left: 3px; }
.files .sort { top: 1px; left: 67px; }
.files tr.bucket th { height: 32px; padding: 2px 0 0; border: 0; }
.bucket span { display: flex; align-items: center; gap: 5px; margin: 0 -5px 0 -8px; font-size: 14px; line-height: 20px; color: #1e3287; }
.bucket .fold { color: #777; }
.bucket span::after { content: ""; flex: 1; height: 1px; margin-left: 3px; background: #e2e2e2; }
.files td { height: 21px; padding: 0 6px; white-space: nowrap; }
.files td:first-child { display: flex; align-items: center; gap: 4px; padding-left: 4px; color: #000; }
.files td:last-child { text-align: right; padding-right: 4px; }
.selected { background: #cce8ff; outline: 1px solid #99d1ff; outline-offset: -1px; }
.hbar { display: flex; align-items: center; height: 16px; margin-top: auto; background: #f0f0f0; }
.west { width: 16px; height: 6px; color: #444; transform: rotate(90deg); }
.hbar span { height: 16px; width: 88%; background: #cdcdcd; }
.status { display: flex; align-items: center; flex: none; gap: 21px; height: 25px; padding: 0 0 1px 14px; color: #1e395b; }
.tooltip { position: absolute; left: 242px; top: 264px; width: 193px; padding: 1px 5px 2px; background: #fff; border: 1px solid #767676; color: #575757; white-space: nowrap; }

.toast { position: absolute; right: 16px; bottom: 13px; width: 364px; padding: 16px; background: #1f1f1f; color: #fff; }
.toast header { display: flex; align-items: center; gap: 10px; height: 21px; padding: 0 7px 0 2px; font-size: 11px; }
.toast header button { margin-left: auto; }
.offer { display: flex; gap: 16px; margin: 14px 0 20px; color: #a5a5a5; font-size: 14px; line-height: 20px; }
.offer p { margin: 0; }
.offer strong { color: #fff; font-weight: 600; }
.xbox { width: 60px; height: 60px; }
.choices { display: grid; grid-template-columns: 1fr 1fr; gap: 4px; }
.choices button { height: 32px; background: #4c4c4c; font-size: 13px; }
.brand { position: absolute; right: 48px; bottom: 10px; display: flex; align-items: center; gap: 5px; color: #ffffff90; font: 34px/60px "DejaVu Sans Condensed", "Liberation Sans", sans-serif; pointer-events: none; }
.brand svg { width: 54px; height: 60px; }

.taskbar { display: flex; flex: none; height: 40px; background: linear-gradient(90deg, #001a25, #02121e 60%, #020a18); color: #fff; }
.taskbar button { width: 48px; display: grid; place-items: center; }
.ask { display: flex; align-items: center; gap: 11px; width: 288px; padding-left: 11px; background: #f2f2f2; border: 1px solid #c5c5c5; color: #111; font-size: 14px; }
.ask input { flex: 1; min-width: 0; }
.ask input::placeholder { color: #333; }
.taskbar .app { margin-left: 3px; width: 48px; padding-top: 2px; border-bottom: 2px solid transparent; }
.taskbar .app + .app { margin-left: 1px; }
.taskbar .app svg { width: 24px; height: 24px; }
.taskbar .on { background: #2d454f; border-color: #76b9ed; }
.taskbar .run { border-color: #76b9ed; }
.tray { display: flex; align-items: center; gap: 8px; margin-left: auto; margin-right: 4px; padding-right: 20px; border-right: 1px solid #455; }
.tray .flip { margin-right: 2px; }
.tray time { width: 58px; margin: 0 -1px 0 1px; text-align: center; line-height: 18px; }
.bell { position: relative; margin-left: 7px; }
.bell b { position: absolute; left: 8px; top: 8px; width: 15px; height: 15px; border-radius: 50%; background: #333b45; border: 1px solid #667; font-size: 10px; line-height: 13px; text-align: center; }
```
